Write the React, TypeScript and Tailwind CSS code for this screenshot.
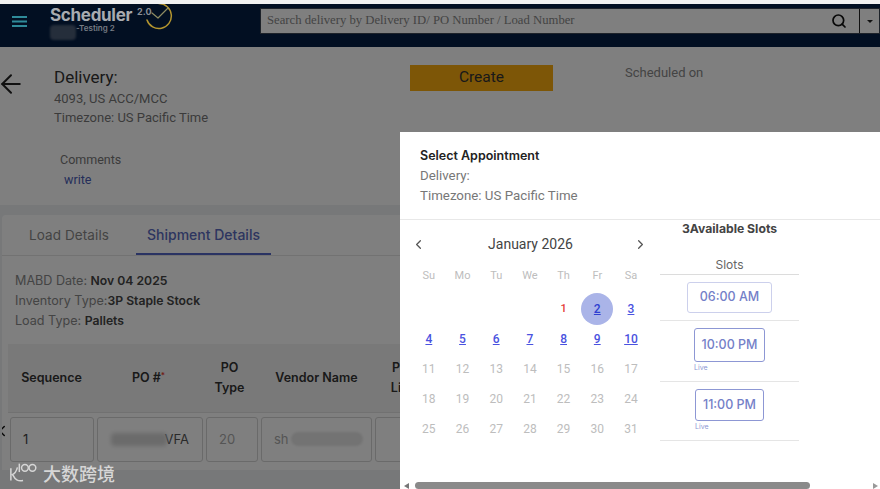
import { ChevronLeft, ChevronRight, ArrowLeft, Search } from 'lucide-react';

const WEEKDAYS = ['Su', 'Mo', 'Tu', 'We', 'Th', 'Fr', 'Sa'];
const LINKED = [3, 4, 5, 6, 7, 8, 9, 10];

function SchedulerLogo() {
    return (
        <div className="relative z-20 flex flex-col pt-[2px] leading-none">
            <div className="flex h-[18px] items-start">
                <span className="text-[17px] font-bold leading-[18px] text-[#a8abb0] font-['Inter',sans-serif] tracking-[-0.3px]">Scheduler</span>
                <span className="ml-[5px] mt-[1px] text-[9px] font-bold text-[#8b8f96] font-['Inter',sans-serif]">2.0</span>
                <svg width="28" height="28" viewBox="0 0 28 28" fill="none" className="-ml-[7px] -mt-[3px]">
                    <path d="M14 .5A12.5 12.5 0 1 1 2 17" stroke="#b4952f" strokeWidth="1.5" strokeLinecap="round" />
                    <path d="M7 10l6 5 10-10" stroke="#8f8c62" strokeWidth="1.2" strokeLinecap="round" strokeLinejoin="round" />
                </svg>
            </div>
            <div className="flex items-start text-[8px] font-semibold leading-[8px] text-[#777c84] font-['Inter',sans-serif]">
                <span className="mt-[1px] h-[15px] w-[26px] rounded-sm bg-[#252e3b] blur-[1px]" />
                <span>-Testing 2</span>
            </div>
        </div>
    );
}

function Watermark() {
    return (
        <div className="absolute bottom-[5px] left-[9px] z-30 flex items-center gap-[4px] text-[#d6d6d6]">
            <svg width="30" height="22" viewBox="0 0 32 22" fill="none" stroke="currentColor" strokeWidth="1.6">
                <path d="M2 6v13M3 13c3-1 5-4 6-8M4 13c3 6 6 7 11 6" />
                <path d="M11 1v9" />
                <circle cx="17" cy="5.5" r="3.6" />
                <circle cx="25" cy="5.5" r="3.6" />
            </svg>
            <span className="text-[18px] font-medium leading-none font-['Noto_Sans_CJK_SC',sans-serif]">大数跨境</span>
        </div>
    );
}

function HeadCell({ className, children }: { className: string; children: React.ReactNode }) {
    return <div className={`flex shrink-0 items-center justify-center text-center ${className}`}>{children}</div>;
}

function InputCell({ className, children }: { className: string; children?: React.ReactNode }) {
    return (
        <div className={`flex h-[45px] shrink-0 items-center overflow-hidden rounded-[3px] border border-[#d4d4d4] bg-white pl-3 text-[13px] ${className}`}>
            {children}
        </div>
    );
}

function Slot({ label, live, width, height }: { label: string; live?: boolean; width: string; height: string }) {
    return (
        <div className="flex flex-col items-center border-b border-[#e5e5e5] py-[7px]">
            <div className="flex flex-col items-start">
                <div className={`flex items-center justify-center rounded-[3px] border-[1.5px] text-[12.5px] font-medium text-[#7480c8] font-['Inter',sans-serif] ${width} ${height} ${live ? 'border-[#8d97d4]' : 'border-[#ccd0ec]'}`}>
                    {label}
                </div>
                {live && <span className="my-[1px] text-[7px] leading-[10px] text-[#8d97d4] font-['Inter',sans-serif]">Live</span>}
            </div>
        </div>
    );
}

function Calendar() {
    const cells: (number | null)[] = [null, null, null, null, ...Array.from({ length: 31 }, (_, i) => i + 1)];
    return (
        <div className="w-[260px] shrink-0 px-[12px] pt-[13px] font-['Roboto',sans-serif]">
            <div className="flex h-[22px] items-center justify-between text-[#555]">
                <ChevronLeft className="-ml-[1px] h-[15px] w-[15px]" strokeWidth={2} />
                <span className="pl-[2px] text-[14px] text-[#444]">January 2026</span>
                <ChevronRight className="h-[15px] w-[15px]" strokeWidth={2} />
            </div>
            <div className="mt-[6px] grid grid-cols-[repeat(7,33.7px)] text-center">
                {WEEKDAYS.map((d) => (
                    <div key={d} className="flex h-[33px] items-center justify-center pb-[3px] text-[11px] text-[#bdbdbd]">{d}</div>
                ))}
                {cells.map((day, i) => {
                    if (day === null) return <div key={i} className="h-[30px]" />;
                    if (day === 1) return <div key={i} className="flex h-[30px] items-center justify-center text-[11px] font-medium text-[#e53935]">1</div>;
                    if (day === 2) {
                        return (
                            <div key={i} className="flex h-[30px] items-center justify-center">
                                <span className="flex h-[32px] w-[32px] shrink-0 items-center justify-center rounded-full bg-[#aab4e8] text-[12px] font-medium text-[#2f3fd0] underline">2</span>
                            </div>
                        );
                    }
                    return (
                        <div
                            key={i}
                            className={`flex h-[30px] items-center justify-center text-[12px] ${LINKED.includes(day) ? 'font-medium text-[#4a52e0] underline' : 'text-[#bdbdbd]'}`}
                        >
                            {day}
                        </div>
                    );
                })}
            </div>
        </div>
    );
}

function AppointmentModal() {
    return (
        <div className="absolute bottom-0 left-[400px] top-[132px] z-20 flex w-[480px] flex-col bg-white">
            {/* Header */}
            <div className="h-[88px] shrink-0 border-b border-[#e8e8e8] pl-[20px] pt-[14px] font-['Roboto',sans-serif]">
                <div className="text-[12.5px] font-semibold leading-[20px] text-[#222] font-['Inter',sans-serif]">Select Appointment</div>
                <div className="text-[13.3px] leading-[20px] text-[#777]">Delivery:</div>
                <div className="text-[13.3px] leading-[20px] text-[#777]">Timezone: US Pacific Time</div>
            </div>
            {/* Body */}
            <div className="flex min-h-0 flex-1">
                <Calendar />
                <div className="w-[139px] shrink-0">
                    <div className="pt-[1px] text-center text-[12.2px] font-bold leading-[16px] text-[#444] font-['Inter',sans-serif]">3Available Slots</div>
                    <div className="mt-[19px] border-b border-[#dcdcdc] pb-[1px] text-center text-[12px] leading-[17px] text-[#666] font-['Inter',sans-serif]">Slots</div>
                    <Slot label="06:00 AM" width="w-[85px]" height="h-[31px]" />
                    <Slot label="10:00 PM" live width="w-[71px]" height="h-[34px]" />
                    <Slot label="11:00 PM" live width="w-[69px]" height="h-[32px]" />
                </div>
            </div>
            {/* Horizontal scrollbar */}
            <div className="flex h-[7px] shrink-0 items-center">
                <span className="ml-[4px] h-0 w-0 border-y-[3px] border-r-[5px] border-y-transparent border-r-[#777]" />
                <span className="ml-[6px] h-[7px] w-[395px] rounded-full bg-[#8a8a8a]" />
                <span className="ml-auto mr-[2px] h-0 w-0 border-y-[3px] border-l-[5px] border-y-transparent border-l-[#999]" />
            </div>
        </div>
    );
}

export default function App() {
    return (
        <div className="relative h-[489px] w-[880px] overflow-hidden bg-white font-['Roboto',sans-serif]">
            <div className="h-[4px] bg-[#f1f1f1]" />
            <div className="relative h-[485px] overflow-hidden">
                {/* Navbar */}
                <div className="flex h-[43px] items-start bg-[#041e44]">
                    <svg width="15" height="11" viewBox="0 0 15 11" className="relative z-20 ml-[12px] mt-[12px]" fill="#2f8b9a">
                        <rect width="15" height="2" />
                        <rect y="4.5" width="15" height="2" />
                        <rect y="9" width="15" height="2" />
                    </svg>
                    <div className="ml-[23px]"><SchedulerLogo /></div>
                    <div className="ml-auto mt-[4px] flex h-[26px] w-[620px] items-center border border-[#3a4452] bg-white">
                        <span className="flex-1 pl-[6px] text-[12.7px] text-[#888] font-['Liberation_Serif',serif]">Search delivery by Delivery ID/ PO Number / Load Number</span>
                        <Search className="mr-[12px] h-[16px] w-[16px] text-[#111]" strokeWidth={2.6} />
                        <div className="flex h-full w-[20px] items-center justify-center border-l border-[#222]">
                            <span className="h-0 w-0 border-x-[3px] border-t-[3px] border-x-transparent border-t-[#222]" />
                        </div>
                    </div>
                </div>

                {/* Delivery header */}
                <div className="flex h-[101px] items-start">
                    <ArrowLeft className="-ml-[4px] mt-[22px] h-[30px] w-[30px] text-[#222]" strokeWidth={1.6} />
                    <div className="ml-[28px] mt-[18px] w-[356px]">
                        <div className="text-[17px] leading-[24px] text-[#333]">Delivery:</div>
                        <div className="text-[13px] leading-[19px] text-[#777]">4093, US ACC/MCC</div>
                        <div className="text-[13px] leading-[19px] text-[#777]">Timezone: US Pacific Time</div>
                    </div>
                    <div className="mt-[18px] flex h-[26px] w-[143px] items-center justify-center bg-[#fbac0f] text-[15.5px] text-[#333]">Create</div>
                    <div className="ml-[72px] mt-[18px] text-[13px] leading-[16px] text-[#888]">Scheduled on</div>
                </div>

                {/* Comments */}
                <div className="h-[57px] pl-[60px] pt-[2px] text-[12.5px]">
                    <div className="leading-[20px] text-[#777]">Comments</div>
                    <div className="pl-[4px] leading-[20px] text-[#4a5cb5]">write</div>
                </div>

                {/* Tabbed card */}
                <div className="h-[284px] bg-[#eef0f2] pl-[2px] pt-[10px] font-['Inter',sans-serif]">
                    <div className="h-[255px] overflow-hidden rounded-t-[4px] bg-white">
                        <div className="flex h-[41px] border-b border-[#e4e4e4]">
                            <div className="flex w-[134px] items-center justify-center text-[13.5px] tracking-[0.1px] text-[#888]">Load Details</div>
                            <div className="flex w-[135px] items-center justify-center border-b-2 border-[#5567c7] text-[14px] font-medium text-[#5a6bc0]">Shipment Details</div>
                        </div>
                        <div className="pl-[13px] pt-[15px] text-[12.6px] leading-[20px] text-[#888]">
                            <div>MABD Date: <span className="text-[12.2px] font-semibold text-[#444]">Nov 04 2025</span></div>
                            <div>Inventory Type:<span className="text-[12.2px] font-semibold text-[#444]">3P Staple Stock</span></div>
                            <div>Load Type: <span className="text-[12.2px] font-semibold text-[#444]">Pallets</span></div>
                        </div>
                        {/* Table */}
                        <div className="relative ml-[6px] mt-[13px] text-[12.5px] font-semibold text-[#333]">
                            <div className="flex h-[69px] items-stretch border-b border-[#e2e2e2] bg-[#f2f2f2]">
                                <HeadCell className="w-[87px]">Sequence</HeadCell>
                                <HeadCell className="w-[107px]"><span>PO #<span className="align-top text-[8px] text-[#e53935]">*</span></span></HeadCell>
                                <HeadCell className="w-[55px] leading-[20px]">PO<br />Type</HeadCell>
                                <HeadCell className="w-[119px]">Vendor Name</HeadCell>
                                <HeadCell className="w-[40px] leading-[20px]">P<br />Li</HeadCell>
                            </div>
                            <ChevronLeft className="absolute -left-[15px] top-[78px] h-[18px] w-[18px] text-[#111]" strokeWidth={2} />
                            <div className="flex gap-[3px] pl-[2px] pt-[4px] font-normal">
                                <InputCell className="w-[84px] text-[#444]">1</InputCell>
                                <InputCell className="relative w-[106px] text-[#555]">
                                    <span className="w-full pr-[13px] text-right">VFA</span>
                                    <span className="absolute left-[13px] top-[15px] h-[13px] w-[56px] rounded-sm bg-[#d6d6d6] blur-[2px]" />
                                </InputCell>
                                <InputCell className="w-[52px] text-[#aaa]">20</InputCell>
                                <InputCell className="relative w-[111px] text-[#aaa]">
                                    <span>sh</span>
                                    <span className="absolute left-[29px] top-[14px] h-[14px] w-[72px] rounded-full bg-[#e6e6e6] blur-[1px]" />
                                </InputCell>
                                <InputCell className="w-[40px]" />
                            </div>
                        </div>
                    </div>
                </div>

                {/* Modal backdrop */}
                <div className="absolute inset-0 z-10 bg-black/50" />
            </div>
            <AppointmentModal />
            <Watermark />
        </div>
    );
}
